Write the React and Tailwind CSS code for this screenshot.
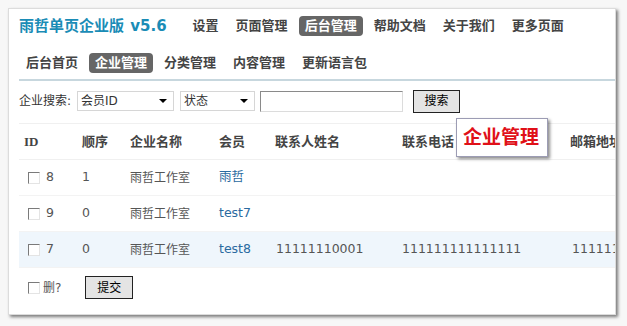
const cjk = { fontFamily: '"DejaVu Sans", "Noto Sans CJK SC", sans-serif' }

const topNav = ["设置", "页面管理", "后台管理", "帮助文档", "关于我们", "更多页面"]
const subNav = ["后台首页", "企业管理", "分类管理", "内容管理", "更新语言包"]

const rows = [
  { id: 8, order: 1, name: "雨哲工作室", member: "雨哲", contact: "", phone: "", mail: "" },
  { id: 9, order: 0, name: "雨哲工作室", member: "test7", contact: "", phone: "", mail: "" },
  { id: 7, order: 0, name: "雨哲工作室", member: "test8", contact: "11111110001", phone: "111111111111111", mail: "11111111" },
]

const cols = "grid grid-cols-[59px_47px_89px_56px_127px_168px_140px]"

function Checkbox() {
  return (
    <span className="inline-block h-[12px] w-[12px] border border-t-[#7a7a7a] border-l-[#7a7a7a] border-r-[#e4e4e4] border-b-[#e4e4e4] bg-white" />
  )
}

function FakeSelect({ label, width }) {
  return (
    <div
      className={`flex h-[20px] items-center justify-between border border-[#d6d6d6] bg-white pl-[3px] pr-[6px] text-[12px] text-[#333] ${width}`}
    >
      <span>{label}</span>
      <span className="h-0 w-0 border-x-[4px] border-t-[4px] border-x-transparent border-t-black" />
    </div>
  )
}

function OldButton({ children, className }) {
  return (
    <button
      className={`flex items-center justify-center border border-[#222] bg-[#e4e4e4] text-[12px] text-black ${className}`}
    >
      {children}
    </button>
  )
}

export default function App() {
  return (
    <div className="h-[326px] w-[627px] overflow-hidden bg-[#f7f7f7] pl-[8px] pt-[8px]" style={cjk}>
      <div className="relative h-[307px] w-[608px] overflow-hidden border border-[#dcdcdc] bg-white shadow-[2px_2px_3px_rgba(0,0,0,0.5)]">
        {/* top nav */}
        <div className="flex h-[20px] items-center pl-[10px] pt-0 mt-[7px]">
          <span className="text-[15px] font-bold text-[#1a8cb6]">
            雨哲单页企业版 <span className="ml-[1px]">v5.6</span>
          </span>
          <div className="ml-[20px] flex items-center gap-[5px]">
            {topNav.map((item) => (
              <span
                key={item}
                className={`rounded-[4px] px-[6px] py-[1px] text-[13px] font-bold leading-[18px] ${
                  item === "后台管理" ? "bg-[#666] text-white" : "text-[#444]"
                }`}
              >
                {item}
              </span>
            ))}
          </div>
        </div>

        {/* sub nav */}
        <div className="mt-[17px] flex h-[20px] items-center gap-[5px] pl-[11px]">
          {subNav.map((item) => (
            <span
              key={item}
              className={`rounded-[4px] px-[6px] py-[1px] text-[13px] font-bold leading-[18px] ${
                item === "企业管理" ? "bg-[#666] text-white" : "text-[#444]"
              }`}
            >
              {item}
            </span>
          ))}
        </div>

        <div className="ml-[10px] mt-[6px] h-[2px] bg-[#c7d7de]" />

        {/* search */}
        <div className="mt-[9px] flex h-[22px] items-center pl-[10px] text-[12px] text-[#333]">
          <span className="w-[58px]">企业搜索:</span>
          <FakeSelect label="会员ID" width="w-[97px]" />
          <div className="w-[6px]" />
          <FakeSelect label="状态" width="w-[75px]" />
          <div className="ml-[5px] h-[21px] w-[143px] border border-t-[#8a8a8a] border-l-[#8a8a8a] border-r-[#dcdcdc] border-b-[#dcdcdc] bg-white" />
          <OldButton className="ml-[10px] h-[23px] w-[47px]">搜索</OldButton>
        </div>

        {/* table */}
        <div className="ml-[10px] mt-[11px] w-[720px]">
          <div
            className={`${cols} h-[37px] items-center border-y border-[#f0f0f0] text-[13px] font-bold text-[#444]`}
            style={{ fontFamily: '"Liberation Serif", "Noto Sans CJK SC", serif' }}
          >
            <span className="pl-[5px]">ID</span>
            <span className="pl-[4px]">顺序</span>
            <span className="pl-[5px]">企业名称</span>
            <span className="pl-[5px]">会员</span>
            <span className="pl-[5px]">联系人姓名</span>
            <span className="pl-[5px]">联系电话</span>
            <span className="pl-[5px]">邮箱地址</span>
          </div>
          {rows.map((r, i) => (
            <div
              key={r.id}
              className={`${cols} h-[36px] items-center border-b border-[#f3f3f3] text-[12.5px] text-[#555] ${
                i === 2 ? "bg-[#eff6fc]" : ""
              }`}
            >
              <span className="flex items-center gap-[6px] pl-[9px]">
                <Checkbox />
                {r.id}
              </span>
              <span className="pl-[4px]">{r.order}</span>
              <span className="pl-[5px] text-[12px]">{r.name}</span>
              <span className="pl-[5px] text-[#2a6aa0]">{r.member}</span>
              <span className="pl-[6px]">{r.contact}</span>
              <span className="pl-[5px]">{r.phone}</span>
              <span className="pl-[7px]">{r.mail}</span>
            </div>
          ))}
        </div>

        {/* footer */}
        <div className="mt-[8px] flex h-[23px] items-center pl-[19px] text-[12px] text-[#555]">
          <Checkbox />
          <span className="ml-[3px]">删?</span>
          <OldButton className="ml-[24px] h-[23px] w-[48px]">提交</OldButton>
        </div>

        {/* tooltip */}
        <div className="absolute left-[447px] top-[109px] flex h-[39px] w-[92px] items-center border border-[#9c9cb4] bg-white pl-[6px] shadow-[2px_2px_3px_rgba(0,0,0,0.45)]">
          <span className="text-[19px] font-bold text-[#e01018]">企业管理</span>
        </div>
      </div>
    </div>
  )
}
